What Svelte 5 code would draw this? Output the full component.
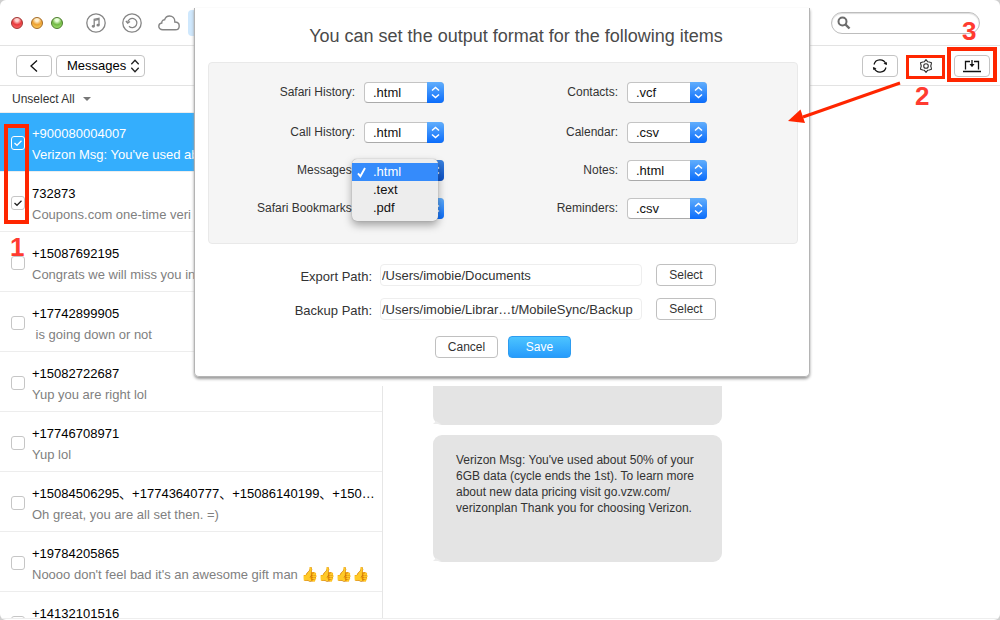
<script>
  const conversations = [
    { id: 1, title: '+900080004007', preview: "Verizon Msg: You've used about 50% of your", checked: true, active: true },
    { id: 2, title: '732873', preview: 'Coupons.com one-time veri', checked: true },
    { id: 3, title: '+15087692195', preview: 'Congrats we will miss you in' },
    { id: 4, title: '+17742899905', preview: ' is going down or not' },
    { id: 5, title: '+15082722687', preview: 'Yup you are right lol' },
    { id: 6, title: '+17746708971', preview: 'Yup lol' },
    { id: 7, title: '+15084506295、+17743640777、+15086140199、+150…', preview: 'Oh great, you are all set then. =)' },
    { id: 8, title: '+19784205865', preview: "Noooo don't feel bad it's an awesome gift man", emoji: '👍👍👍👍' },
    { id: 9, title: '+14132101516', preview: '' }
  ];

  const formats = [
    { id: 'safari-history', label: 'Safari History:', value: '.html' },
    { id: 'contacts', label: 'Contacts:', value: '.vcf' },
    { id: 'call-history', label: 'Call History:', value: '.html' },
    { id: 'calendar', label: 'Calendar:', value: '.csv' },
    { id: 'messages', label: 'Messages:', value: '.html', open: true },
    { id: 'notes', label: 'Notes:', value: '.html' },
    { id: 'safari-bookmarks', label: 'Safari Bookmarks:', value: '.html' },
    { id: 'reminders', label: 'Reminders:', value: '.csv' }
  ];

  const menuItems = ['.html', '.text', '.pdf'];

  const paths = [
    { id: 'export-path', label: 'Export Path:', value: '/Users/imobie/Documents' },
    { id: 'backup-path', label: 'Backup Path:', value: '/Users/imobie/Librar…t/MobileSync/Backup' }
  ];
</script>

<div class="window">
  <header class="titlebar">
    <div class="lights">
      <button class="light red" aria-label="Close"></button>
      <button class="light amber" aria-label="Minimize"></button>
      <button class="light green" aria-label="Zoom"></button>
    </div>
    <nav class="modes">
      <button class="plain" aria-label="iTunes library">
        <svg width="20" height="20" viewBox="0 0 20 20" fill="none" stroke="#858585" stroke-width="1.3">
          <circle cx="10" cy="10" r="9.2" />
          <path d="M8.2 13.2V6.3l4.800-1v6.700" />
          <path d="M8.2 7.300l4.800-1" />
          <ellipse cx="7.3" cy="13.3" rx="1" ry=".7" fill="#858585" />
          <ellipse cx="12.1" cy="12.2" rx="1" ry=".7" fill="#858585" />
        </svg>
      </button>
      <button class="plain" aria-label="Backups">
        <svg width="20" height="20" viewBox="0 0 20 20" fill="none" stroke="#858585" stroke-width="1.3">
          <circle cx="10" cy="10" r="9.2" />
          <path d="M5.700 9.800A4.600 4.600 0 1 1 7 13.200" />
          <path d="M3.900 8l1.800 2.200L8 8.500" />
        </svg>
      </button>
      <button class="plain" aria-label="iCloud">
        <svg width="22" height="16" viewBox="0 0 22 16" fill="none" stroke="#858585" stroke-width="1.4">
          <path d="M4.8 14.8C2.4 14.8.8 13.300.8 11.300c0-1.800 1.300-3.100 3-3.300-.2-2 1.200-3.300 2.800-3.200C7.400 2.400 9.200 1 11.500 1c3.100 0 5.300 2.300 5.300 5.200v.8c2.500 0 4.400 1.600 4.400 3.900 0 2.200-1.700 3.900-4 3.900z" />
        </svg>
      </button>
      <button class="tab" aria-label="Device"></button>
    </nav>
    <label class="search">
      <svg width="14" height="14" viewBox="0 0 14 14" fill="none" stroke="#6c6c6c">
        <circle cx="5.500" cy="5.500" r="4" stroke-width="2" />
        <path d="M8.500 8.500l4 4" stroke-width="2.400" />
      </svg>
      <input type="search" aria-label="Search" />
    </label>
  </header>

  <div class="toolbar">
    <button class="tool" aria-label="Back">
      <svg width="10" height="14" viewBox="0 0 10 14" fill="none" stroke="#111" stroke-width="1.300"><path d="M8 1.500L2 7l6 5.500" /></svg>
    </button>
    <div class="category">
      <select aria-label="Category"><option>Messages</option></select>
      <svg width="10" height="14" viewBox="0 0 10 14" fill="none" stroke="#222" stroke-width="1.300"><path d="M1.300 5.300L5 1.300l3.700 4M1.300 8.700l3.700 4 3.700-4" /></svg>
    </div>
    <div class="actions">
      <button class="tool" aria-label="Refresh">
        <svg width="16" height="16" viewBox="0 0 16 16" fill="none" stroke="#111" stroke-width="1.200">
          <path d="M2 6.500A6.200 6.200 0 0 1 13.800 6M14 9.500A6.200 6.200 0 0 1 2.200 10" />
          <path d="M11.500 5.800l3.600 1.300-.4-3.200zM4.500 10.200L.9 8.900l.4 3.200z" fill="#111" stroke="none" />
        </svg>
      </button>
      <button class="tool faint" aria-label="Settings">
        <svg width="14" height="14" viewBox="0 0 14 14" fill="none" stroke="#333" stroke-width="1.100">
          <path d="M7 .7L8.600 2.700 10.200 3 12.500 3.800 12.100 6 11.700 7 12.100 8 12.500 10.200 10.200 11 8.600 11.300 7 13.300 5.400 11.300 3.800 11 1.500 10.200 1.900 8 2.300 7 1.900 6 1.500 3.800 3.800 3 5.400 2.700z" stroke-linejoin="round" />
          <circle cx="7" cy="7" r="2.300" />
        </svg>
      </button>
      <button class="tool" aria-label="Export to computer">
        <svg width="18" height="14" viewBox="0 0 18 14" fill="none" stroke="#111" stroke-width="1.300">
          <path d="M7 2.500H2.500v8M11 2.500h4.500v8M0 12.500h18" />
          <path d="M9 1v5" />
          <path d="M6.500 5L9 8.200 11.500 5z" fill="#111" stroke="none" />
        </svg>
      </button>
    </div>
  </div>

  <main class="body">
    <aside class="sidebar">
      <button class="unselect">Unselect All <span class="caret"></span></button>
      <ul class="list">
        {#each conversations as item (item.id)}
          <li class="row" class:active={item.active}>
            <input type="checkbox" id="conv-{item.id}" checked={item.checked} />
            <label for="conv-{item.id}">
              <span class="name">{item.title}</span>
              <span class="preview">{item.preview}{#if item.emoji}<span class="emoji">{item.emoji}</span>{/if}</span>
            </label>
          </li>
        {/each}
      </ul>
    </aside>
    <section class="thread">
      <div class="bubble"></div>
      <div class="bubble">
        Verizon Msg: You've used about 50% of your 6GB data (cycle ends the 1st). To learn more about new data pricing visit go.vzw.com/<wbr />verizonplan Thank you for choosing Verizon.
      </div>
    </section>
  </main>

  <div class="sheet">
    <form class="dialog" onsubmit={(e) => e.preventDefault()}>
      <h1>You can set the output format for the following items</h1>
      <div class="formats">
        {#each formats as f (f.id)}
          <label for={f.id}>{f.label}</label>
          <div class="popup" class:open={f.open}>
            <select id={f.id}><option>{f.value}</option></select>
            <span class="cap">
              <svg width="9" height="13" viewBox="0 0 9 13" fill="none" stroke="#fff" stroke-width="1.500"><path d="M1 4.500l3.500-3 3.500 3M1 8.500l3.500 3 3.500-3" /></svg>
            </span>
            {#if f.open}
              <div class="menu" role="listbox" aria-label="Message format">
                {#each menuItems as m, i}
                  <button type="button" role="option" aria-selected={i === 0} class:chosen={i === 0}>
                    {#if i === 0}
                      <svg width="9" height="11" viewBox="0 0 9 11" fill="none" stroke="#fff" stroke-width="1.900"><path d="M1 6.300l2.400 3L8 1" /></svg>
                    {/if}
                    {m}
                  </button>
                {/each}
              </div>
            {/if}
          </div>
        {/each}
      </div>
      <div class="paths">
        {#each paths as p (p.id)}
          <label for={p.id}>{p.label}</label>
          <input id={p.id} type="text" value={p.value} readonly />
          <button type="button" class="push">Select</button>
        {/each}
      </div>
      <div class="buttons">
        <button type="button" class="push">Cancel</button>
        <button type="submit" class="push primary">Save</button>
      </div>
    </form>
  </div>

  <div class="mark one"><span>1</span></div>
  <div class="mark two"><span>2</span></div>
  <div class="mark three"><span>3</span></div>
  <svg class="arrow" width="120" height="48" viewBox="0 0 120 48">
    <path d="M117 5L20 39" stroke="#ff2600" stroke-width="3" />
    <path d="M5 43L17.500 31.500 22 45z" fill="#ff2600" />
  </svg>
</div>

<style>
  :global(body) {
    background: #cfcfcf;
  }

  .window {
    position: relative;
    display: flex;
    flex-direction: column;
    height: 100vh;
    overflow: hidden;
    border-radius: 6px;
    background: #fff;
    color: #333;
    font: 13px/16px 'Liberation Sans', 'Noto Sans CJK SC', sans-serif;
  }

  .window * {
    box-sizing: border-box;
  }

  button,
  select,
  input {
    margin: 0;
    padding: 0;
    border: 0;
    background: none;
    color: inherit;
    font: inherit;
    appearance: none;
  }

  svg {
    display: block;
  }

  .titlebar {
    display: flex;
    align-items: center;
    flex: none;
    height: 46px;
    padding: 0 20px 0 11px;
    border-bottom: 1px solid #e3e3e3;
  }

  .lights {
    display: flex;
    gap: 8px;
  }

  .light {
    width: 12px;
    height: 12px;
    border-radius: 50%;
  }

  .red {
    border: 1px solid #a03432;
    background: radial-gradient(circle at 50% 20%, #ffd5d2 0 15%, #e8393c 50%, #f77);
  }

  .amber {
    border: 1px solid #a36a26;
    background: radial-gradient(circle at 50% 20%, #fff0d0 0 15%, #eda030 50%, #ffdc70);
  }

  .green {
    border: 1px solid #4b7c2c;
    background: radial-gradient(circle at 50% 20%, #e8ffd8 0 15%, #72b944 50%, #b0ee80);
  }

  .modes {
    display: flex;
    align-items: center;
    gap: 16px;
    margin-left: 23px;
  }

  .tab {
    width: 40px;
    height: 26px;
    margin-left: -8px;
    border-radius: 4px;
    background: #cfe8fd;
  }

  .search {
    display: flex;
    align-items: center;
    width: 149px;
    height: 22px;
    margin-left: auto;
    padding: 0 5px;
    border: 1px solid #bdbdbd;
    border-radius: 11px;
    box-shadow: inset 0 1px 1px #ddd;
  }

  .search input {
    flex: 1;
    min-width: 0;
  }

  .toolbar {
    display: flex;
    align-items: center;
    flex: none;
    gap: 4px;
    height: 40px;
    padding: 0 10px 0 16px;
    border-bottom: 1px solid #e3e3e3;
  }

  .tool {
    display: flex;
    align-items: center;
    justify-content: center;
    width: 36px;
    height: 22px;
    border: 1px solid #c4c4c4;
    border-radius: 4px;
  }

  .faint {
    border-color: #eee;
  }

  .category {
    position: relative;
    width: 89px;
    color: #000;
  }

  .category select {
    display: block;
    width: 100%;
    height: 22px;
    padding-left: 10px;
    border: 1px solid #c4c4c4;
    border-radius: 4px;
  }

  .category svg {
    position: absolute;
    top: 4px;
    right: 5px;
    pointer-events: none;
  }

  .actions {
    display: flex;
    gap: 10px;
    margin-left: auto;
  }

  .body {
    display: flex;
    flex: 1;
    min-height: 0;
    margin-bottom: 1px;
    border-bottom: 1px solid #eee;
  }

  .sidebar {
    display: flex;
    flex-direction: column;
    flex: none;
    width: 383px;
    overflow: hidden;
    border-right: 1px solid #e6e6e6;
  }

  .unselect {
    display: flex;
    align-items: center;
    flex: none;
    gap: 8px;
    height: 26px;
    padding-left: 12px;
    font-size: 12px;
  }

  .caret {
    border: 4px solid transparent;
    border-top-color: #777;
    border-bottom-width: 0;
  }

  .list {
    margin: 0;
    padding: 0;
    list-style: none;
  }

  .row {
    display: flex;
    gap: 7px;
    height: 60px;
    padding: 11px 4px 0 11px;
    border-top: 1px solid #ededed;
  }

  .row:first-child {
    height: 59px;
    padding-top: 10px;
  }

  .active {
    background: #34aefd;
    background-clip: padding-box;
  }

  .row input {
    flex: none;
    width: 14px;
    height: 14px;
    margin-top: 13px;
    border: 1px solid #c6c6c6;
    border-radius: 3px;
  }

  .row input:checked {
    background: url("data:image/svg+xml,%3Csvg xmlns='http://www.w3.org/2000/svg' viewBox='0 0 12 12'%3E%3Cpath d='M2.500 6l2.500 2.300L9.500 3.800' fill='none' stroke='%23222' stroke-width='1.300'/%3E%3C/svg%3E") center / 12px no-repeat;
  }

  .active input:checked {
    border-color: #fff;
    background-image: url("data:image/svg+xml,%3Csvg xmlns='http://www.w3.org/2000/svg' viewBox='0 0 12 12'%3E%3Cpath d='M2.500 6l2.500 2.300L9.500 3.800' fill='none' stroke='%23fff' stroke-width='1.300'/%3E%3C/svg%3E");
  }

  .row label {
    min-width: 0;
    flex: 1;
  }

  .name,
  .preview {
    display: block;
    height: 21px;
    overflow: hidden;
    line-height: 21px;
    text-overflow: ellipsis;
    white-space: pre;
  }

  .name {
    color: #000;
  }

  .preview {
    color: #808080;
  }

  .emoji {
    margin-left: 3px;
    font-size: 14px;
  }

  .active .name,
  .active .preview {
    color: #fff;
  }

  .thread {
    display: flex;
    flex-direction: column;
    flex: 1;
    gap: 10px;
    padding: 212px 50px 0;
  }

  .bubble {
    position: relative;
    width: 289px;
    min-height: 127px;
    padding: 17px 22px 0 23px;
    border-radius: 9px;
    background: #e4e4e4;
    font-size: 12px;
  }

  .bubble::before {
    content: '';
    position: absolute;
    bottom: 1px;
    left: 0;
    width: 8px;
    height: 3px;
    background: #ececec;
    clip-path: polygon(0 100%, 40% 0, 100% 100%);
  }

  .sheet {
    position: absolute;
    top: 8px;
    right: 190px;
    left: 194px;
    padding-bottom: 9px;
    background: #fff;
  }

  .dialog {
    padding: 16px 11px 18px 13px;
    border: 1px solid #b4b4b4;
    border-top: 0;
    border-radius: 0 0 5px 5px;
    box-shadow: 0 2px 3px #999;
  }

  h1 {
    margin: 0 0 14px 26px;
    color: #4a4a4a;
    font-size: 18px;
    font-weight: 300;
    line-height: 24px;
    text-align: center;
  }

  .formats {
    display: grid;
    grid-template-columns: 146fr 80px 165fr 80px;
    grid-template-rows: 23px repeat(3, 21px);
    align-items: start;
    gap: 17px 9px;
    padding: 19px 90px 24px 0;
    border: 1px solid #e9e9e9;
    border-radius: 4px;
    background: #f5f5f5;
  }

  .formats label,
  .paths label {
    line-height: 21px;
    text-align: right;
    white-space: nowrap;
  }

  .formats label {
    font-size: 12px;
  }

  .popup {
    position: relative;
    height: 21px;
    color: #111;
  }

  .popup select {
    display: block;
    width: 80px;
    height: 21px;
    padding: 1px 0 0 8px;
    border: 1px solid #c4c4c4;
    border-bottom-color: #aaa;
    border-radius: 4px;
    background: #fff;
  }

  .cap {
    position: absolute;
    top: 0;
    right: 0;
    display: flex;
    align-items: center;
    justify-content: center;
    width: 17px;
    height: 21px;
    border-radius: 0 4px 4px 0;
    background: linear-gradient(#61aefc, #0a6cfb);
    pointer-events: none;
  }

  .open .cap {
    background: linear-gradient(#3b83e0, #0a50c8);
  }

  .menu {
    position: absolute;
    top: -1px;
    left: -12px;
    z-index: 1;
    width: 86px;
    padding: 4px 0;
    border-radius: 5px;
    background: #ededed;
    box-shadow: 0 0 1px #888, 0 4px 8px rgb(0 0 0 / 35%);
  }

  .menu button {
    display: flex;
    align-items: center;
    justify-content: flex-start;
    gap: 7px;
    width: 100%;
    height: 18px;
    padding-left: 21px;
  }

  .menu .chosen {
    padding-left: 5px;
    background: #358bfb;
    color: #fff;
  }

  .paths {
    display: grid;
    grid-template-columns: 172fr 262px 74px 82fr;
    gap: 10px 0;
    margin-top: 20px;
  }

  .paths label {
    grid-column: 1;
    padding: 2px 8px 0 0;
    line-height: 22px;
  }

  .paths input {
    height: 22px;
    padding: 0 1px;
    border: 1px solid #eee;
    border-radius: 4px;
    text-overflow: ellipsis;
  }

  .paths .push {
    width: 60px;
    margin-left: 14px;
  }

  .push {
    height: 22px;
    border: 1px solid #c0c0c0;
    border-radius: 4px;
    background: #fff;
    font-size: 12px;
  }

  .buttons {
    display: flex;
    justify-content: center;
    gap: 10px;
    margin-top: 14px;
  }

  .buttons .push {
    width: 63px;
  }

  .buttons .primary {
    border-color: #2d9cf0;
    background: linear-gradient(#4cc4ff, #269bfc);
    color: #fff;
  }

  .mark {
    position: absolute;
    border: 4px solid #ff2600;
    pointer-events: none;
  }

  .mark span {
    position: absolute;
    color: #ff3b30;
    font-size: 26px;
    font-weight: 700;
    line-height: 26px;
  }

  .one {
    top: 124px;
    left: 4px;
    width: 25px;
    height: 100px;
  }

  .one span {
    top: 106px;
    left: 2px;
  }

  .two {
    top: 55px;
    right: 55px;
    width: 39px;
    height: 24px;
    border-width: 3px;
  }

  .two span {
    top: 25px;
    left: 6px;
  }

  .three {
    top: 47px;
    right: 3px;
    width: 50px;
    height: 35px;
  }

  .three span {
    top: -33px;
    left: 11px;
  }

  .arrow {
    position: absolute;
    top: 78px;
    right: 97px;
    pointer-events: none;
  }
</style>
